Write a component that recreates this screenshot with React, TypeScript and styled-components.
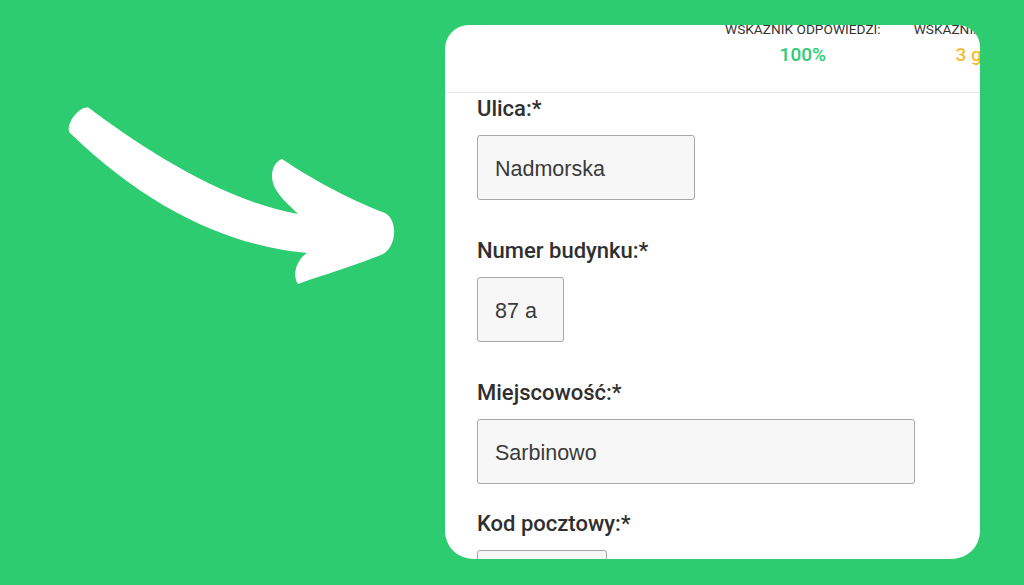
import styled, { createGlobalStyle } from "styled-components";

const GlobalStyle = createGlobalStyle`
  html, body {
    margin: 0;
    padding: 0;
    background: #2ecc71;
  }
  body {
    font-family: Roboto, "Noto Sans", "Liberation Sans", sans-serif;
  }
  * {
    box-sizing: border-box;
  }
`;

const stats = [
  { label: "WSKAŹNIK ODPOWIEDZI:", value: "100%", color: "#2ecc71" },
  { label: "WSKAŹNIK SZYBKOŚCI:", value: "3 godz.", color: "#f7b92f" },
];

const fields = [
  { label: "Ulica:*", value: "Nadmorska", width: 218, space: 0 },
  { label: "Numer budynku:*", value: "87 a", width: 87, space: 38 },
  { label: "Miejscowość:*", value: "Sarbinowo", width: 438, space: 38 },
  { label: "Kod pocztowy:*", value: "", width: 130, space: 27 },
];

export default function App() {
  return (
    <>
      <GlobalStyle />
      <Page>
        <ArrowArea>
          <ArrowSvg viewBox="0 0 445 585" aria-hidden="true">
            <path
              d="M 70 133
                 C 64 126, 80 104, 89 108
                 C 140 146, 220 200, 298 214
                 C 288 204, 276 194, 273 183
                 C 270 172, 274 162, 282 159
                 C 310 178, 350 200, 385 213
                 C 398 220, 397 246, 383 254
                 C 360 264, 320 276, 298 284
                 C 292 276, 296 260, 307 253
                 C 230 246, 150 210, 70 133 Z"
              fill="#ffffff"
            />
          </ArrowSvg>
        </ArrowArea>

        <Card>
          <Header>
            <Stats>
              {stats.map((s) => (
                <Stat key={s.label}>
                  <StatLabel>{s.label}</StatLabel>
                  <StatValue $color={s.color}>{s.value}</StatValue>
                </Stat>
              ))}
            </Stats>
          </Header>

          <Form>
            {fields.map((f) => (
              <Field key={f.label} $space={f.space}>
                <Label>{f.label}</Label>
                <TextInput $width={f.width} value={f.value} readOnly />
              </Field>
            ))}
          </Form>
        </Card>
      </Page>
    </>
  );
}

const Page = styled.div`
  width: 1024px;
  height: 585px;
  display: grid;
  grid-template-columns: 445px 535px;
  overflow: hidden;
  background: #2ecc71;
`;

const ArrowArea = styled.div`
  height: 585px;
`;

const ArrowSvg = styled.svg`
  display: block;
  width: 445px;
  height: 585px;
`;

const Card = styled.div`
  margin-top: 25px;
  height: 534px;
  background: #ffffff;
  border-radius: 24px 22px 28px 28px;
  overflow: hidden;
`;

const Header = styled.div`
  height: 68px;
  border-bottom: 1px solid #e6e9f3;
  padding-left: 280px;
  overflow: hidden;
`;

const Stats = styled.div`
  display: flex;
  gap: 33px;
  margin-top: -4px;
`;

const Stat = styled.div`
  display: flex;
  flex-direction: column;
  align-items: center;
  flex-shrink: 0;
  white-space: nowrap;
`;

const StatLabel = styled.div`
  font-size: 13.7px;
  line-height: 16px;
  color: #333333;
`;

const StatValue = styled.div<{ $color: string }>`
  margin-top: 7px;
  font-size: 19px;
  line-height: 22px;
  font-weight: 500;
  color: ${(p) => p.$color};
`;

const Form = styled.div`
  padding: 3px 0 0 32px;
`;

const Field = styled.div<{ $space: number }>`
  display: flex;
  flex-direction: column;
  align-items: flex-start;
  margin-top: ${(p) => p.$space}px;
`;

const Label = styled.label`
  font-size: 22px;
  line-height: 26px;
  font-weight: 500;
  color: #2f2f2f;
  margin-bottom: 13px;
`;

const TextInput = styled.input<{ $width: number }>`
  width: ${(p) => p.$width}px;
  height: 65px;
  padding: 4px 17px 0;
  font-family: "Liberation Sans", Arial, sans-serif;
  font-size: 21.5px;
  color: #3a3a3a;
  background: #f7f7f7;
  border: 1px solid #a7a7a7;
  border-radius: 3px;
  outline: none;
`;
